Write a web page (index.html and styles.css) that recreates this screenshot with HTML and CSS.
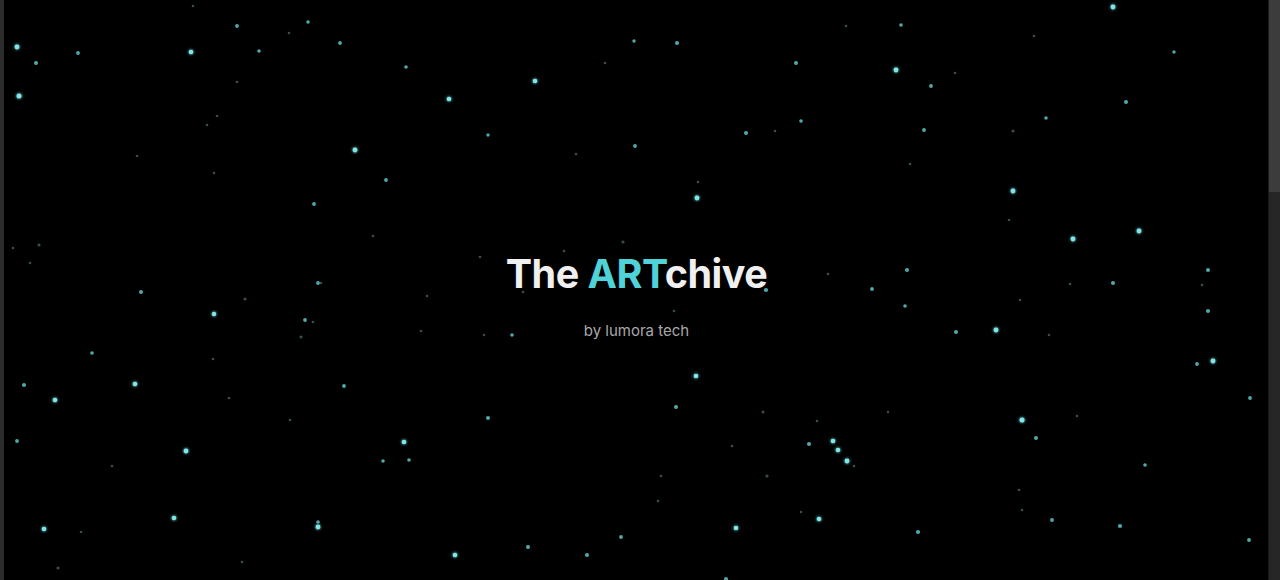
FILE: index.html
```html
<!DOCTYPE html>
<html lang="en">
<head>
<meta charset="utf-8">
<title>The ARTchive</title>
<link rel="stylesheet" href="styles.css">
</head>
<body>
<div class="window">
  <main class="stage">
    <svg class="sky" viewBox="4 0 1265 580" width="1265" height="580" aria-hidden="true">
      <defs>
        <filter id="glow" x="-3" y="-3" width="7" height="7">
          <feGaussianBlur stdDeviation="1.8" result="b"/>
          <feMerge><feMergeNode in="b"/><feMergeNode in="SourceGraphic"/></feMerge>
        </filter>
      </defs>
      <g class="faint">
        <circle cx="193" cy="6" r="1.3"/><circle cx="289" cy="33" r="1.3"/><circle cx="237" cy="82" r="1.3"/>
        <circle cx="217" cy="116" r="1.3"/><circle cx="207" cy="125" r="1.3"/><circle cx="137" cy="156" r="1.3"/>
        <circle cx="214" cy="173" r="1.3"/><circle cx="13" cy="248" r="1.3"/><circle cx="39" cy="245" r="1.6"/>
        <circle cx="30" cy="263" r="1.3"/><circle cx="605" cy="63" r="1.3"/><circle cx="576" cy="154" r="1.3"/>
        <circle cx="373" cy="236" r="1.3"/><circle cx="480" cy="257" r="1.3"/><circle cx="564" cy="251" r="1.3"/>
        <circle cx="623" cy="242" r="1.6"/><circle cx="321" cy="283" r="1.3"/><circle cx="846" cy="26" r="1.3"/>
        <circle cx="955" cy="73" r="1.3"/><circle cx="775" cy="131" r="1.3"/><circle cx="910" cy="164" r="1.3"/>
        <circle cx="698" cy="182" r="1.3"/><circle cx="828" cy="274" r="1.3"/><circle cx="1034" cy="36" r="1.3"/>
        <circle cx="1013" cy="131" r="1.6"/><circle cx="1009" cy="220" r="1.3"/><circle cx="1070" cy="284" r="1.3"/>
        <circle cx="1202" cy="285" r="1.3"/><circle cx="245" cy="299" r="1.6"/><circle cx="313" cy="322" r="1.3"/>
        <circle cx="301" cy="337" r="1.6"/><circle cx="213" cy="359" r="1.3"/><circle cx="229" cy="398" r="1.3"/>
        <circle cx="290" cy="420" r="1.3"/><circle cx="112" cy="466" r="1.3"/><circle cx="81" cy="532" r="1.3"/>
        <circle cx="58" cy="568" r="1.6"/><circle cx="242" cy="562" r="1.3"/><circle cx="427" cy="296" r="1.3"/>
        <circle cx="421" cy="331" r="1.3"/><circle cx="484" cy="335" r="1.3"/><circle cx="523" cy="292" r="1.3"/>
        <circle cx="674" cy="311" r="1.3"/><circle cx="763" cy="412" r="1.5"/><circle cx="888" cy="412" r="1.3"/>
        <circle cx="817" cy="421" r="1.3"/><circle cx="732" cy="446" r="1.3"/><circle cx="854" cy="466" r="1.3"/>
        <circle cx="661" cy="476" r="1.3"/><circle cx="767" cy="476" r="1.6"/><circle cx="658" cy="501" r="1.3"/>
        <circle cx="801" cy="512" r="1.3"/><circle cx="1020" cy="300" r="1.3"/><circle cx="1049" cy="335" r="1.3"/>
        <circle cx="1077" cy="416" r="1.3"/><circle cx="1019" cy="490" r="1.3"/><circle cx="1022" cy="510" r="1.3"/>
      </g>
      <g class="mid">
        <circle cx="237" cy="26" r="1.9"/><circle cx="308" cy="22" r="1.8"/><circle cx="78" cy="53" r="1.9"/>
        <circle cx="259" cy="51" r="1.8"/><circle cx="36" cy="63" r="2"/><circle cx="314" cy="204" r="1.9"/>
        <circle cx="318" cy="283" r="1.9"/><circle cx="340" cy="43" r="1.9"/><circle cx="406" cy="67" r="1.8"/>
        <circle cx="488" cy="135" r="1.7"/><circle cx="386" cy="180" r="1.9"/><circle cx="634" cy="41" r="1.7"/>
        <circle cx="635" cy="146" r="1.9"/><circle cx="677" cy="43" r="2"/><circle cx="901" cy="25" r="1.8"/>
        <circle cx="796" cy="63" r="2"/><circle cx="931" cy="86" r="1.9"/><circle cx="801" cy="121" r="1.8"/>
        <circle cx="746" cy="133" r="2"/><circle cx="924" cy="130" r="1.9"/><circle cx="907" cy="270" r="2"/>
        <circle cx="872" cy="289" r="1.9"/><circle cx="766" cy="290" r="2.1"/><circle cx="1174" cy="52" r="1.7"/>
        <circle cx="1126" cy="102" r="2"/><circle cx="1046" cy="118" r="1.8"/><circle cx="1208" cy="270" r="2"/>
        <circle cx="1113" cy="283" r="2"/><circle cx="141" cy="292" r="2"/><circle cx="305" cy="320" r="1.9"/>
        <circle cx="92" cy="353" r="1.8"/><circle cx="24" cy="385" r="2"/><circle cx="17" cy="441" r="1.9"/>
        <circle cx="318" cy="522" r="1.8"/><circle cx="512" cy="335" r="1.8"/><circle cx="344" cy="386" r="1.9"/>
        <circle cx="488" cy="418" r="2"/><circle cx="383" cy="461" r="1.8"/><circle cx="409" cy="460" r="1.8"/>
        <circle cx="528" cy="547" r="2"/><circle cx="587" cy="555" r="2"/><circle cx="621" cy="537" r="1.9"/>
        <circle cx="905" cy="306" r="1.8"/><circle cx="956" cy="332" r="2"/><circle cx="676" cy="407" r="2"/>
        <circle cx="809" cy="444" r="2"/><circle cx="918" cy="532" r="2.1"/><circle cx="726" cy="579" r="2"/>
        <circle cx="1208" cy="311" r="2"/><circle cx="1197" cy="364" r="1.9"/><circle cx="1250" cy="398" r="1.9"/>
        <circle cx="1036" cy="438" r="2"/><circle cx="1145" cy="465" r="1.8"/><circle cx="1052" cy="520" r="1.9"/>
        <circle cx="1120" cy="526" r="2.1"/><circle cx="1249" cy="540" r="1.9"/>
      </g>
      <g class="bright" filter="url(#glow)">
        <circle cx="17" cy="47" r="2.4"/><circle cx="191" cy="52" r="2.3"/><circle cx="19" cy="96" r="2.5"/>
        <circle cx="535" cy="81" r="2.3"/><circle cx="449" cy="99" r="2.3"/><circle cx="355" cy="150" r="2.4"/>
        <circle cx="896" cy="70" r="2.4"/><circle cx="697" cy="198" r="2.4"/><circle cx="1113" cy="7" r="2.4"/>
        <circle cx="1013" cy="191" r="2.4"/><circle cx="1073" cy="239" r="2.4"/><circle cx="1139" cy="231" r="2.4"/>
        <circle cx="214" cy="314" r="2.2"/><circle cx="135" cy="384" r="2.3"/><circle cx="55" cy="400" r="2.3"/>
        <circle cx="186" cy="451" r="2.4"/><circle cx="174" cy="518" r="2.3"/><circle cx="44" cy="529" r="2.3"/>
        <circle cx="318" cy="527" r="2.4"/><circle cx="404" cy="442" r="2.3"/><circle cx="455" cy="555" r="2.3"/>
        <circle cx="696" cy="376" r="2.3"/><circle cx="833" cy="441" r="2.3"/><circle cx="838" cy="450" r="2.3"/>
        <circle cx="847" cy="461" r="2.4"/><circle cx="819" cy="519" r="2.3"/><circle cx="736" cy="528" r="2.3"/>
        <circle cx="996" cy="330" r="2.4"/><circle cx="1213" cy="361" r="2.4"/><circle cx="1022" cy="420" r="2.5"/>
      </g>
    </svg>
    <div class="hero">
      <h1 class="title">The <span class="accent">ART</span>chive</h1>
      <p class="byline">by lumora tech</p>
    </div>
  </main>
  <div class="scrollbar"><div class="thumb"></div></div>
</div>
</body>
</html>
```
FILE: styles.css
```css
html, body {
  margin: 0;
  padding: 0;
  height: 100%;
  background: #000;
  overflow: hidden;
}

body {
  font-family: Inter, "Noto Sans", "Liberation Sans", sans-serif;
}

.window {
  display: flex;
  height: 580px;
  width: 1280px;
  border-left: 4px solid #2c2c2c;
  box-sizing: border-box;
}

.stage {
  position: relative;
  flex: 1;
  display: flex;
  align-items: center;
  justify-content: center;
  background: #000;
  overflow: hidden;
}

.sky {
  position: absolute;
  inset: 0;
  display: block;
}

.sky .faint circle {
  fill: #6f9c9c;
  opacity: 0.5;
}

.sky .mid circle {
  fill: #62cfd2;
  opacity: 0.82;
}

.sky .bright circle {
  fill: #7fe6ea;
}

.hero {
  position: relative;
  display: flex;
  flex-direction: column;
  align-items: center;
  margin-left: 1px;
  margin-top: 13px;
}

.title {
  margin: 0;
  font-size: 39.5px;
  font-weight: 700;
  letter-spacing: -0.5px;
  line-height: 1;
  color: #f0f0f0;
}

.accent {
  color: #4fd3d8;
}

.byline {
  margin: 28px 0 0;
  font-size: 15px;
  color: #a8a8a8;
  line-height: 1;
}

.scrollbar {
  width: 11px;
  flex: none;
  background: #262626;
  border-left: 1px solid #1a1a1a;
}

.thumb {
  height: 192px;
  background: #3c3c3c;
}
```
